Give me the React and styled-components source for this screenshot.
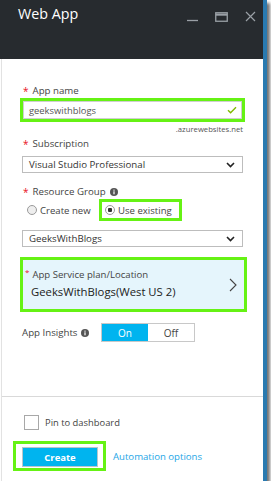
import React from 'react'
import styled, { createGlobalStyle } from 'styled-components'

const GlobalStyle = createGlobalStyle`
  html, body {
    margin: 0;
    padding: 0;
    background: #ffffff;
  }
  body {
    font-family: "Open Sans", "Noto Sans", sans-serif;
  }
`

const lime = '#66f214'

export default function App() {
  return (
    <>
      <GlobalStyle />
      <Blade>
        <Header>
          <Title>Web App</Title>
          <WindowButtons>
            <svg width="11" height="12" viewBox="0 0 11 12">
              <path d="M0 10.5h11" stroke="#9aa0a6" strokeWidth="1.3" />
            </svg>
            <svg width="13" height="10" viewBox="0 0 13 10">
              <rect x="0.75" y="0.75" width="11.5" height="8.5" fill="none" stroke="#9aa0a6" strokeWidth="1.3" />
              <path d="M0.75 2.6h11.5" stroke="#9aa0a6" strokeWidth="2.2" />
            </svg>
            <svg width="11" height="11" viewBox="0 0 11 11">
              <path d="M1 1l9 9M10 1l-9 9" stroke="#9aa0a6" strokeWidth="1.2" />
            </svg>
          </WindowButtons>
        </Header>

        <Body>
          <Label><Star>*</Star>App name</Label>
          <HighlightInput>
            <span>geekswithblogs</span>
            <svg width="10" height="8" viewBox="0 0 10 8">
              <path d="M1 4.2l2.6 2.6L9 1.2" fill="none" stroke="#7fba00" strokeWidth="1.4" />
            </svg>
          </HighlightInput>
          <Suffix>.azurewebsites.net</Suffix>

          <Label><Star>*</Star>Subscription</Label>
          <Select $top={5}>
            <span>Visual Studio Professional</span>
            <ChevronDown />
          </Select>

          <Label $top={11}><Star>*</Star>Resource Group<Info /></Label>
          <RadioRow>
            <RadioOption>
              <Radio />
              <span>Create new</span>
            </RadioOption>
            <RadioHighlight>
              <Radio $checked />
              <span>Use existing</span>
            </RadioHighlight>
          </RadioRow>
          <Select $top={9}>
            <span>GeeksWithBlogs</span>
            <ChevronDown />
          </Select>

          <PlanBox>
            <PlanText>
              <PlanLabel><Star $small>*</Star>App Service plan/Location</PlanLabel>
              <PlanValue>GeeksWithBlogs(West US 2)</PlanValue>
            </PlanText>
            <svg width="8" height="14" viewBox="0 0 8 14">
              <path d="M1 1l6 6-6 6" fill="none" stroke="#444" strokeWidth="1.1" />
            </svg>
          </PlanBox>

          <InsightsRow>
            <InsightsLabel>App Insights<Info /></InsightsLabel>
            <Toggle>
              <ToggleSegment $active>On</ToggleSegment>
              <ToggleSegment>Off</ToggleSegment>
            </Toggle>
          </InsightsRow>
        </Body>

        <Footer>
          <PinRow>
            <CheckBox />
            <span>Pin to dashboard</span>
          </PinRow>
          <ActionRow>
            <ButtonHighlight>
              <CreateButton>Create</CreateButton>
            </ButtonHighlight>
            <Link>Automation options</Link>
          </ActionRow>
        </Footer>
      </Blade>
    </>
  )
}

function ChevronDown() {
  return (
    <svg width="9" height="6" viewBox="0 0 9 6">
      <path d="M1 1l3.5 3.5L8 1" fill="none" stroke="#222" strokeWidth="1.6" />
    </svg>
  )
}

function Info() {
  return (
    <InfoDot>
      <svg width="8" height="8" viewBox="0 0 8 8">
        <circle cx="4" cy="4" r="4" fill="#555" />
        <rect x="3.4" y="3.3" width="1.2" height="3" fill="#fff" />
        <rect x="3.4" y="1.6" width="1.2" height="1.1" fill="#fff" />
      </svg>
    </InfoDot>
  )
}

const Blade = styled.div`
  width: 266px;
  height: 481px;
  box-sizing: border-box;
  display: flex;
  flex-direction: column;
  background: #ffffff;
  border-right: 4px solid #2a7ab0;
  border-left: 1px solid #e2e2e2;
  margin-left: 1px;
  box-shadow: 3px 3px 3px rgba(0, 0, 0, 0.55);
`

const Header = styled.div`
  height: 59px;
  flex: none;
  background: #272b2f;
  display: flex;
  align-items: flex-start;
  justify-content: space-between;
  padding: 3px 7px 0 18px;
  margin-left: -2px;
  box-sizing: border-box;
`

const Title = styled.div`
  color: #ffffff;
  font-size: 14.3px;
  line-height: 22px;
`

const WindowButtons = styled.div`
  display: flex;
  align-items: flex-end;
  gap: 17px;
  height: 18px;
  margin-top: 1px;
`

const Body = styled.div`
  flex: 1;
  display: flex;
  flex-direction: column;
  padding: 24px 20px 0 20px;
`

const Label = styled.div`
  display: flex;
  align-items: center;
  height: 15px;
  margin-top: ${p => p.$top || 0}px;
  font-size: 9.7px;
  color: #444;
`

const Star = styled.span`
  color: #e81123;
  font-size: ${p => (p.$small ? 8 : 10)}px;
  margin-right: ${p => (p.$small ? 3 : 4)}px;
  margin-left: 1px;
  align-self: ${p => (p.$small ? 'flex-start' : 'auto')};
  line-height: ${p => (p.$small ? '8px' : 'inherit')};
`

const InfoDot = styled.span`
  display: inline-flex;
  margin-left: 4px;
`

const HighlightInput = styled.div`
  height: 24px;
  margin: 0 -2px;
  box-sizing: border-box;
  border: 3px solid ${lime};
  box-shadow: inset 0 0 0 1px #cfcfcf;
  display: flex;
  align-items: center;
  justify-content: space-between;
  padding: 0 5px 0 6px;
  font-size: 9.4px;
  color: #555;
`

const Suffix = styled.div`
  text-align: right;
  font-size: 7.7px;
  line-height: 14px;
  color: #555;
`

const Select = styled.div`
  height: 17px;
  margin-top: ${p => p.$top}px;
  box-sizing: border-box;
  border: 1px solid #bdbdbd;
  display: flex;
  align-items: center;
  justify-content: space-between;
  padding: 0 7px 0 6px;
  font-size: 9.7px;
  color: #333;
`

const RadioRow = styled.div`
  display: flex;
  align-items: center;
  height: 22px;
  font-size: 9.6px;
  color: #444;
`

const RadioOption = styled.div`
  display: flex;
  align-items: center;
  gap: 3px;
  padding-left: 5px;
  width: 72px;
`

const RadioHighlight = styled.div`
  display: flex;
  align-items: center;
  gap: 3px;
  height: 22px;
  width: 83px;
  box-sizing: border-box;
  border: 3px solid ${lime};
  padding-left: 3px;
`

const Radio = styled.span`
  width: 8px;
  height: 8px;
  border-radius: 50%;
  border: 1px solid #9a9a9a;
  background: ${p => (p.$checked ? 'radial-gradient(circle, #333 0 2px, #fff 2.5px)' : '#eee')};
  box-sizing: content-box;
`

const PlanBox = styled.div`
  height: 55px;
  margin: 10px -4px 0 -2px;
  box-sizing: border-box;
  border: 3px solid ${lime};
  background: #e5f5fc;
  display: flex;
  align-items: center;
  justify-content: space-between;
  padding: 0 7px 0 1px;
`

const PlanText = styled.div`
  display: flex;
  flex-direction: column;
`

const PlanLabel = styled.div`
  display: flex;
  font-size: 9.6px;
  line-height: 14px;
  color: #444;
`

const PlanValue = styled.div`
  font-size: 11.3px;
  line-height: 19px;
  color: #222;
  padding-left: 7px;
`

const InsightsRow = styled.div`
  display: flex;
  align-items: center;
  margin-top: 11px;
  height: 19px;
`

const InsightsLabel = styled.div`
  display: flex;
  align-items: center;
  width: 79px;
  font-size: 9.7px;
  color: #444;
`

const Toggle = styled.div`
  display: flex;
  height: 19px;
  border: 1px solid #c8c8c8;
  box-sizing: border-box;
`

const ToggleSegment = styled.div`
  width: 46px;
  display: flex;
  align-items: center;
  justify-content: center;
  font-size: 10px;
  background: ${p => (p.$active ? '#00b4ef' : '#ffffff')};
  color: ${p => (p.$active ? '#ffffff' : '#444')};
`

const Footer = styled.div`
  flex: none;
  height: 85px;
  box-sizing: border-box;
  border-top: 1px solid #d9d9d9;
  padding: 18px 0 0 11px;
  display: flex;
  flex-direction: column;
`

const PinRow = styled.div`
  display: flex;
  align-items: center;
  gap: 6px;
  padding-left: 11px;
  font-size: 9.4px;
  color: #444;
`

const CheckBox = styled.span`
  width: 13px;
  height: 13px;
  border: 1px solid #a8a8a8;
  background: #fff;
`

const ActionRow = styled.div`
  display: flex;
  align-items: center;
  gap: 7px;
  margin-top: 11px;
`

const ButtonHighlight = styled.div`
  width: 93px;
  height: 30px;
  box-sizing: border-box;
  border: 3px solid ${lime};
  padding: 3px 0 0 6px;
`

const CreateButton = styled.div`
  width: 76px;
  height: 20px;
  box-sizing: border-box;
  border: 1px solid #b9c6cc;
  background: #00b4ef;
  color: #fff;
  font-size: 9.5px;
  font-weight: 700;
  display: flex;
  align-items: center;
  justify-content: center;
`

const Link = styled.span`
  font-size: 9.6px;
  color: #1ea6e6;
`
